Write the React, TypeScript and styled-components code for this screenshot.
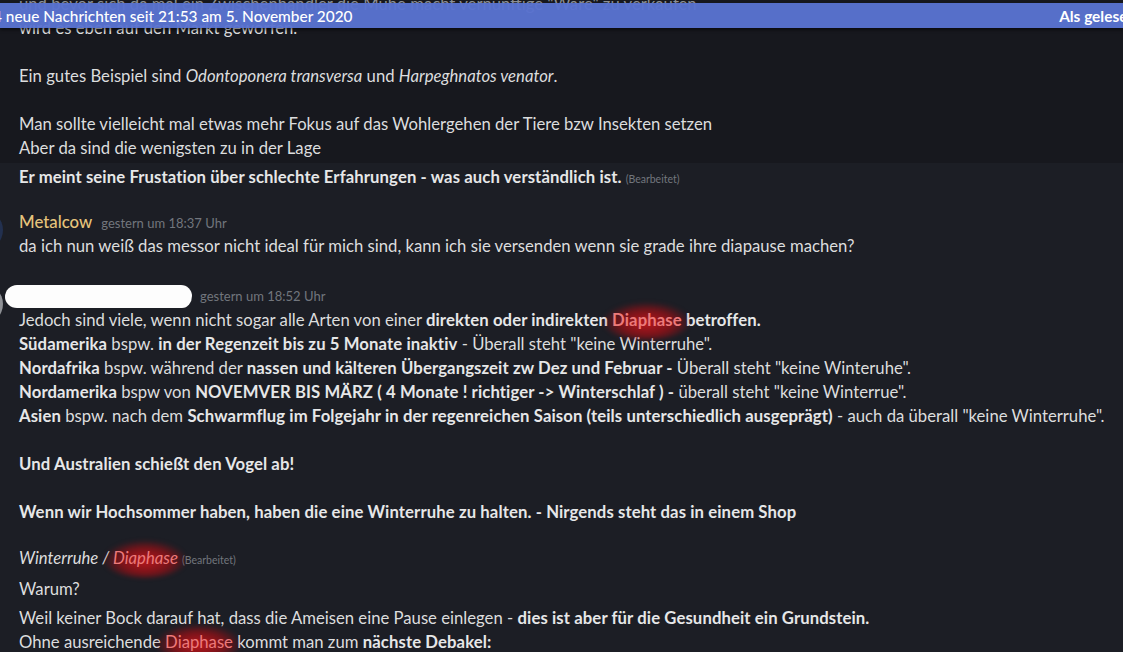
import styled, { createGlobalStyle } from 'styled-components';

const GlobalStyle = createGlobalStyle`
  html, body {
    margin: 0;
    padding: 0;
    background: #1c1e25;
  }
`;

const Chat = styled.div`
  position: relative;
  width: 1123px;
  height: 652px;
  overflow: hidden;
  background: #1c1e25;
  color: #dcddde;
  font-family: Lato, 'Liberation Sans', sans-serif;
  font-size: 16.7px;
  line-height: 24px;
`;

const Scroller = styled.div`
  display: flex;
  flex-direction: column;
  margin-top: -10px;
`;

const NewBar = styled.div`
  position: absolute;
  top: 3px;
  left: 0;
  right: 0;
  height: 25px;
  display: flex;
  align-items: center;
  justify-content: space-between;
  background: rgba(90, 114, 208, 0.96);
  box-shadow: 0 2px 3px rgba(0, 0, 0, 0.5);
  color: #fff;
  font-size: 15.4px;
  font-weight: 500;
  white-space: nowrap;
`;

const BarCount = styled.span`
  margin-left: -7px;
`;

const BarAction = styled.span`
  font-weight: 700;
  margin-right: -86px;
`;

const Message = styled.div<{ $hover?: boolean; $group?: number }>`
  display: flex;
  gap: 16px;
  padding: 2px 0 3px;
  margin-top: ${p => p.$group ?? 0}px;
  background: ${p => (p.$hover ? '#17181e' : 'transparent')};
`;

const Gutter = styled.div`
  flex: 0 0 40px;
  margin-left: -37px;
`;

const Avatar = styled.div<{ $color: string }>`
  width: 40px;
  height: 40px;
  border-radius: 50%;
  background: ${p => p.$color};
`;

const Body = styled.div`
  flex: 1;
  min-width: 0;
`;

const Line = styled.div`
  min-height: 24px;
  white-space: nowrap;
`;

const Header = styled.div`
  display: flex;
  align-items: baseline;
  gap: 9px;
  height: 24px;
`;

const Name = styled.span<{ $color: string }>`
  color: ${p => p.$color};
  font-weight: 500;
  font-size: 16.8px;
`;

const Redacted = styled.span`
  align-self: center;
  width: 187px;
  height: 23px;
  margin-left: -14px;
  margin-right: -1px;
  background: #fdfdfd;
  border-radius: 12px 11px 10px 12px / 12px 11px 12px 11px;
`;

const Stamp = styled.span`
  font-size: 13px;
  color: #72767d;
`;

const Edited = styled.span`
  font-size: 10.5px;
  color: #72767d;
  margin-left: 4px;
`;

const B = styled.b`
  font-weight: 700;
  letter-spacing: 0.1px;
  color: #e6e7e8;
`;

const I = styled.i`
  font-style: italic;
`;

const Ghost = styled(Line)`
  color: #8d9096;
`;

const Marked = styled.span`
  position: relative;
  z-index: 0;
  color: #ec7a7a;

  &::before {
    content: '';
    position: absolute;
    left: -10px;
    right: -9px;
    top: -8px;
    bottom: -10px;
    z-index: -1;
    border-radius: 50%;
    background: radial-gradient(
      ellipse at 50% 55%,
      rgba(200, 22, 28, 0.9) 0%,
      rgba(170, 14, 20, 0.65) 42%,
      rgba(140, 10, 15, 0) 72%
    );
    filter: blur(2px);
  }
`;

const Empty = () => <Line>&nbsp;</Line>;

export default function App() {
  return (
    <Chat>
      <GlobalStyle />
      <Scroller>
        <Message $hover>
          <Gutter />
          <Body>
            <Ghost>und bevor sich da mal ein Zwischenhändler die Mühe macht vernünftige "Ware" zu verkaufen</Ghost>
            <Line>wird es eben auf den Markt geworfen.</Line>
            <Empty />
            <Line>
              Ein gutes Beispiel sind <I>Odontoponera transversa</I> und <I>Harpeghnatos venator</I>.
            </Line>
            <Empty />
            <Line>Man sollte vielleicht mal etwas mehr Fokus auf das Wohlergehen der Tiere bzw Insekten setzen</Line>
            <Line>Aber da sind die wenigsten zu in der Lage</Line>
          </Body>
        </Message>

        <Message>
          <Gutter />
          <Body>
            <Line>
              <B>Er meint seine Frustation über schlechte Erfahrungen - was auch verständlich ist.</B>
              <Edited>(Bearbeitet)</Edited>
            </Line>
          </Body>
        </Message>

        <Message $group={14}>
          <Gutter>
            <Avatar $color="#22304f" />
          </Gutter>
          <Body>
            <Header>
              <Name $color="#e6c47c">Metalcow</Name>
              <Stamp>gestern um 18:37 Uhr</Stamp>
            </Header>
            <Line>
              da ich nun weiß das messor nicht ideal für mich sind, kann ich sie versenden wenn sie grade ihre diapause machen?
            </Line>
          </Body>
        </Message>

        <Message $group={21}>
          <Gutter>
            <Avatar $color="#8e9095" />
          </Gutter>
          <Body>
            <Header>
              <Redacted />
              <Stamp>gestern um 18:52 Uhr</Stamp>
            </Header>
            <Line>
              Jedoch sind viele, wenn nicht sogar alle Arten von einer <B>direkten oder indirekten </B>
              <B><Marked>Diaphase</Marked> betroffen.</B>
            </Line>
            <Line>
              <B>Südamerika</B> bspw. <B>in der Regenzeit bis zu 5 Monate inaktiv</B> - Überall steht "keine Winterruhe".
            </Line>
            <Line>
              <B>Nordafrika</B> bspw. während der <B>nassen und kälteren Übergangszeit zw Dez und Februar -</B> Überall steht "keine Winteruhe".
            </Line>
            <Line>
              <B>Nordamerika</B> bspw von <B>NOVEMVER BIS MÄRZ ( 4 Monate ! richtiger -&gt; Winterschlaf ) -</B> überall steht "keine Winterrue".
            </Line>
            <Line>
              <B>Asien</B> bspw. nach dem <B>Schwarmflug im Folgejahr in der regenreichen Saison (teils unterschiedlich ausgeprägt)</B> - auch da überall "keine Winterruhe".
            </Line>
            <Empty />
            <Line>
              <B>Und Australien schießt den Vogel ab!</B>
            </Line>
            <Empty />
            <Line>
              <B>Wenn wir Hochsommer haben, haben die eine Winterruhe zu halten. - Nirgends steht das in einem Shop</B>
            </Line>
          </Body>
        </Message>

        <Message $group={17}>
          <Gutter />
          <Body>
            <Line>
              <I>
                Winterruhe / <Marked>Diaphase</Marked>
              </I>
              <Edited>(Bearbeitet)</Edited>
            </Line>
          </Body>
        </Message>

        <Message>
          <Gutter />
          <Body>
            <Line>Warum?</Line>
          </Body>
        </Message>

        <Message>
          <Gutter />
          <Body>
            <Line>
              Weil keiner Bock darauf hat, dass die Ameisen eine Pause einlegen - <B>dies ist aber für die Gesundheit ein Grundstein.</B>
            </Line>
            <Line>
              Ohne ausreichende <Marked>Diaphase</Marked> kommt man zum <B>nächste Debakel:</B>
            </Line>
          </Body>
        </Message>
      </Scroller>

      <NewBar>
        <span>
          <BarCount>4</BarCount> neue Nachrichten seit 21:53 am 5. November 2020
        </span>
        <BarAction>Als gelesen markieren</BarAction>
      </NewBar>
    </Chat>
  );
}
